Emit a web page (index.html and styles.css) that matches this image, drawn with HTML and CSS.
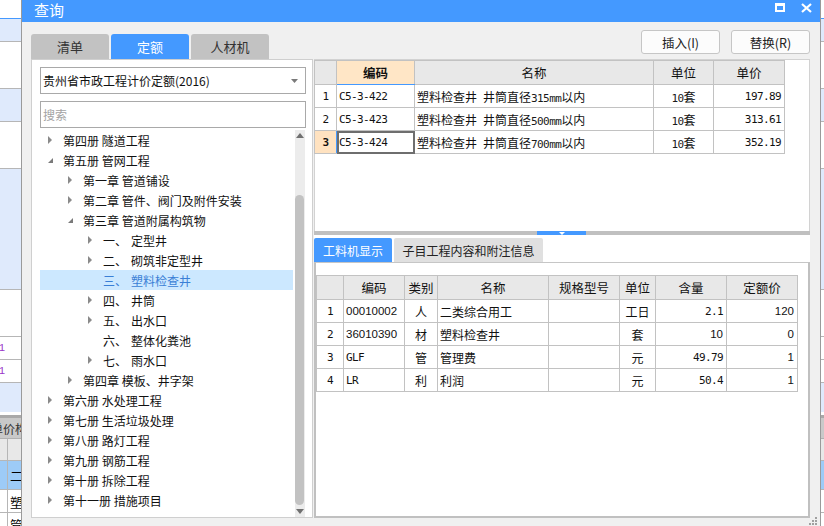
FILE: index.html
```html
<!DOCTYPE html>
<html lang="zh-CN">
<head>
<meta charset="utf-8">
<title>查询</title>
<link rel="stylesheet" href="styles.css">
</head>
<body>
<div class="desk">
  <div class="bg-strip bg-left">
    <div class="bl bl-a"></div>
    <div class="bl bl-b"></div>
    <div class="bl bl-c"></div>
    <div class="bl bl-d"></div>
    <div class="bl bl-c"></div>
    <div class="bl bl-e"></div>
    <div class="bl bl-c"></div>
    <div class="bl bl-f"><span class="purple">21</span></div>
    <div class="bl bl-f"><span class="purple">21</span></div>
    <div class="bl bl-g"></div>
    <div class="bl bl-h"></div>
    <div class="bl bl-head"><span class="hd-text">单价构成</span></div>
    <div class="bl bl-cell"><i class="vl"></i></div>
    <div class="bl bl-sel"><i class="vl"></i><span class="cell-text">二</span></div>
    <div class="bl bl-cell2"><i class="vl"></i><span class="cell-text">塑</span></div>
    <div class="bl bl-cell2"><i class="vl"></i><span class="cell-text">管</span></div>
  </div>

  <div class="dialog">
    <div class="titlebar">
      <span class="title">查询</span>
      <div class="winbtns">
        <svg class="wicon" width="10" height="9" viewBox="0 0 10 9"><rect x="1" y="1" width="8" height="7" fill="none" stroke="#fff" stroke-width="2"/><rect x="0" y="0" width="10" height="3" fill="#fff"/></svg>
        <svg class="wicon" width="11" height="10" viewBox="0 0 11 10"><path d="M1 1 L10 9 M10 1 L1 9" stroke="#fff" stroke-width="2.2" fill="none"/></svg>
      </div>
    </div>

    <div class="dbody">
      <div class="leftcol">
        <div class="tabs">
          <div class="tab">清单</div>
          <div class="tab active">定额</div>
          <div class="tab">人材机</div>
        </div>
        <div class="lpanel">
          <div class="select">
            <span>贵州省市政工程计价定额(2016)</span>
            <svg class="sel-arrow" width="7" height="4" viewBox="0 0 7 4"><polygon points="0,0 7,0 3.5,4" fill="#7a7a7a"/></svg>
          </div>
          <div class="search">搜索</div>
          <div class="treewrap">
            <ul class="tree">
              <li class="node lv0"><svg class="tw" width="16" height="20"><polygon points="1,6 5,10 1,14" fill="#8a8a8a"/></svg><span>第四册 隧道工程</span></li>
              <li class="node lv0"><svg class="tw" width="16" height="20"><polygon points="6,8 6,13 1,13" fill="#7a7a7a"/></svg><span>第五册 管网工程</span></li>
              <li class="node lv1"><svg class="tw" width="16" height="20"><polygon points="1,6 5,10 1,14" fill="#8a8a8a"/></svg><span>第一章 管道铺设</span></li>
              <li class="node lv1"><svg class="tw" width="16" height="20"><polygon points="1,6 5,10 1,14" fill="#8a8a8a"/></svg><span>第二章 管件、阀门及附件安装</span></li>
              <li class="node lv1"><svg class="tw" width="16" height="20"><polygon points="6,8 6,13 1,13" fill="#7a7a7a"/></svg><span>第三章 管道附属构筑物</span></li>
              <li class="node lv2"><svg class="tw" width="16" height="20"><polygon points="1,6 5,10 1,14" fill="#8a8a8a"/></svg><span class="ord">一、</span><span>定型井</span></li>
              <li class="node lv2"><svg class="tw" width="16" height="20"><polygon points="1,6 5,10 1,14" fill="#8a8a8a"/></svg><span class="ord">二、</span><span>砌筑非定型井</span></li>
              <li class="node lv2 selected"><span class="tw"></span><span class="ord">三、</span><span>塑料检查井</span></li>
              <li class="node lv2"><svg class="tw" width="16" height="20"><polygon points="1,6 5,10 1,14" fill="#8a8a8a"/></svg><span class="ord">四、</span><span>井筒</span></li>
              <li class="node lv2"><svg class="tw" width="16" height="20"><polygon points="1,6 5,10 1,14" fill="#8a8a8a"/></svg><span class="ord">五、</span><span>出水口</span></li>
              <li class="node lv2"><span class="tw"></span><span class="ord">六、</span><span>整体化粪池</span></li>
              <li class="node lv2"><svg class="tw" width="16" height="20"><polygon points="1,6 5,10 1,14" fill="#8a8a8a"/></svg><span class="ord">七、</span><span>雨水口</span></li>
              <li class="node lv1"><svg class="tw" width="16" height="20"><polygon points="1,6 5,10 1,14" fill="#8a8a8a"/></svg><span>第四章 模板、井字架</span></li>
              <li class="node lv0"><svg class="tw" width="16" height="20"><polygon points="1,6 5,10 1,14" fill="#8a8a8a"/></svg><span>第六册 水处理工程</span></li>
              <li class="node lv0"><svg class="tw" width="16" height="20"><polygon points="1,6 5,10 1,14" fill="#8a8a8a"/></svg><span>第七册 生活垃圾处理</span></li>
              <li class="node lv0"><svg class="tw" width="16" height="20"><polygon points="1,6 5,10 1,14" fill="#8a8a8a"/></svg><span>第八册 路灯工程</span></li>
              <li class="node lv0"><svg class="tw" width="16" height="20"><polygon points="1,6 5,10 1,14" fill="#8a8a8a"/></svg><span>第九册 钢筋工程</span></li>
              <li class="node lv0"><svg class="tw" width="16" height="20"><polygon points="1,6 5,10 1,14" fill="#8a8a8a"/></svg><span>第十册 拆除工程</span></li>
              <li class="node lv0"><svg class="tw" width="16" height="20"><polygon points="1,6 5,10 1,14" fill="#8a8a8a"/></svg><span>第十一册 措施项目</span></li>
            </ul>
            <div class="vscroll">
              <div class="sb-up"><svg width="8" height="5" viewBox="0 0 8 5"><polygon points="0,5 8,5 4,0" fill="#707070"/></svg></div>
              <div class="sb-track"><div class="sb-thumb"></div></div>
              <div class="sb-down"><svg width="8" height="5" viewBox="0 0 8 5"><polygon points="0,0 8,0 4,5" fill="#707070"/></svg></div>
            </div>
          </div>
        </div>
      </div>

      <div class="rightcol">
        <div class="actions">
          <button class="btn">插入(I)</button>
          <button class="btn">替换(R)</button>
        </div>
        <div class="toppanel">
          <table class="grid tgrid">
            <colgroup><col class="w22"><col class="w78"><col class="w239"><col class="w60"><col class="w71"></colgroup>
            <thead>
              <tr><th></th><th class="cur-col">编码</th><th>名称</th><th>单位</th><th>单价</th></tr>
            </thead>
            <tbody>
              <tr><td class="rn mono">1</td><td class="l mono">C5-3-422</td><td class="l">塑料检查井<span class="mono">&nbsp;</span>井筒直径<span class="mono">315mm</span>以内</td><td class="c"><span class="mono">10</span>套</td><td class="r mono">197.89</td></tr>
              <tr><td class="rn mono">2</td><td class="l mono">C5-3-423</td><td class="l">塑料检查井<span class="mono">&nbsp;</span>井筒直径<span class="mono">500mm</span>以内</td><td class="c"><span class="mono">10</span>套</td><td class="r mono">313.61</td></tr>
              <tr><td class="rn mono cur-row">3</td><td class="l mono cur-cell">C5-3-424</td><td class="l">塑料检查井<span class="mono">&nbsp;</span>井筒直径<span class="mono">700mm</span>以内</td><td class="c"><span class="mono">10</span>套</td><td class="r mono">352.19</td></tr>
            </tbody>
          </table>
        </div>
        <div class="splitter"><div class="split-grip"><svg width="6" height="3" viewBox="0 0 6 3"><polygon points="0,0 6,0 3,3" fill="#fff"/></svg></div></div>
        <div class="bottompanel">
          <div class="btabs">
            <div class="btab active">工料机显示</div>
            <div class="btab">子目工程内容和附注信息</div>
          </div>
          <div class="bbox">
            <table class="grid bgrid">
              <colgroup><col class="w27"><col class="w61"><col class="w33"><col class="w111"><col class="w71"><col class="w36"><col class="w71"><col class="w71"></colgroup>
              <thead>
                <tr><th></th><th>编码</th><th>类别</th><th>名称</th><th>规格型号</th><th>单位</th><th>含量</th><th>定额价</th></tr>
              </thead>
              <tbody>
                <tr><td class="rn mono">1</td><td class="l lat">00010002</td><td class="c">人</td><td class="l">二类综合用工</td><td></td><td class="c">工日</td><td class="r mono">2.1</td><td class="r lat">120</td></tr>
                <tr><td class="rn mono">2</td><td class="l lat">36010390</td><td class="c">材</td><td class="l">塑料检查井</td><td></td><td class="c">套</td><td class="r lat">10</td><td class="r lat">0</td></tr>
                <tr><td class="rn mono">3</td><td class="l mono">GLF</td><td class="c">管</td><td class="l">管理费</td><td></td><td class="c">元</td><td class="r mono">49.79</td><td class="r lat">1</td></tr>
                <tr><td class="rn mono">4</td><td class="l mono">LR</td><td class="c">利</td><td class="l">利润</td><td></td><td class="c">元</td><td class="r mono">50.4</td><td class="r lat">1</td></tr>
              </tbody>
            </table>
          </div>
        </div>
      </div>
    </div>
    <svg class="resize-grip" width="10" height="10" viewBox="0 0 10 10">
      <rect x="7" y="1" width="2" height="2" fill="#a0a0a0"/>
      <rect x="4" y="4" width="2" height="2" fill="#a0a0a0"/><rect x="7" y="4" width="2" height="2" fill="#a0a0a0"/>
      <rect x="1" y="7" width="2" height="2" fill="#a0a0a0"/><rect x="4" y="7" width="2" height="2" fill="#a0a0a0"/><rect x="7" y="7" width="2" height="2" fill="#a0a0a0"/>
    </svg>
  </div>

  <div class="bg-strip bg-right">
    <div class="bl bl-a"></div>
    <div class="bl bl-b"></div>
    <div class="bl bl-c"></div>
    <div class="bl bl-d"></div>
    <div class="bl bl-c"></div>
    <div class="bl bl-e"></div>
    <div class="bl bl-c"></div>
    <div class="bl bl-f"></div>
    <div class="bl bl-f"></div>
    <div class="bl bl-g"></div>
    <div class="bl bl-h"></div>
    <div class="bl bl-head"></div>
    <div class="bl bl-cell"></div>
    <div class="bl bl-sel"></div>
    <div class="bl bl-cell2"></div>
    <div class="bl bl-cell2"></div>
  </div>
</div>
</body>
</html>
```

FILE: styles.css
```css
* { box-sizing: border-box; margin: 0; padding: 0; }
html, body { width: 824px; height: 526px; overflow: hidden; }
body {
  font-family: "Noto Sans CJK SC", "Microsoft YaHei", sans-serif;
  font-size: 12px;
  color: #111;
  background: #fff;
}
.desk { display: flex; width: 824px; height: 526px; overflow: hidden; }

/* background application strips */
.bg-strip { flex: none; display: flex; flex-direction: column; overflow: hidden; background: #fff; }
.bg-left { width: 21px; }
.bg-right { width: 3px; }
.bl { flex: none; display: flex; align-items: center; overflow: hidden; white-space: nowrap; border-bottom: 1px solid #b6b6b6; background: #fff; }
.bl-a { height: 19px; border-bottom-color: #4499ff; }
.bl-b { height: 23px; background: #dfeafc; }
.bl-c { height: 47px; }
.bl-d { height: 33px; background: #dfeafc; }
.bl-e { height: 121px; background: #dfeafc; }
.bl-f { height: 23px; }
.bl-g { height: 29px; background: #dfeafc; border-bottom: none; }
.bl-h { height: 6px; border-bottom: 3px solid #a9a9a9; }
.bl-head { height: 21px; background: #c9c9c9; border-bottom-color: #b0b0b0; }
.bl-cell { height: 22px; background: #e8e8e8; }
.bl-sel { height: 29px; background: #9dcbf7; }
.bl-cell2 { height: 23px; }
.purple { color: #9a36c8; font-family: "Liberation Mono", monospace; font-size: 11px; margin-left: -8px; }
.hd-text { font-size: 12px; color: #333; margin-left: -9px; }
.vl { display: block; flex: none; width: 8px; align-self: stretch; border-right: 1px solid #b6b6b6; }
.cell-text { font-size: 13px; margin-left: 2px; color: #000; }

/* dialog */
.dialog {
  width: 800px; flex: none;
  border-left: 1px solid #9a9a9a; border-right: 1px solid #9a9a9a;
  background: #f0f0f0;
  display: flex; flex-direction: column;
  position: relative;
}
.titlebar {
  height: 22px; flex: none; background: #4499ff;
  display: flex; align-items: flex-start; padding-left: 12px;
}
.title { color: #fff; font-size: 15px; line-height: 20px; }
.winbtns { margin-left: auto; display: flex; align-items: flex-start; gap: 16px; padding-right: 8px; padding-top: 3px; }
.wicon { display: block; }

.dbody { flex: 1; display: flex; gap: 1px; padding: 8px 10px 8px 9px; min-height: 0; }
.leftcol { width: 282px; flex: none; padding-top: 4px; display: flex; flex-direction: column; }
.tabs { display: flex; gap: 2px; height: 25px; flex: none; }
.tab {
  width: 78px; background: #c2c2c2; color: #333; font-size: 13px;
  display: flex; align-items: center; justify-content: center;
  border-radius: 3px 3px 0 0;
}
.tab.active { background: #4499ff; color: #fff; }

.lpanel {
  height: 459px; flex: none; background: #fff; border: 1px solid #cfcfcf;
  padding: 7px 6px 0 8px; display: flex; flex-direction: column;
}
.select, .search {
  height: 27px; flex: none; border: 1px solid #a9a9a9; background: #fff;
  display: flex; align-items: center; padding-left: 2px; font-size: 12px;
}
.select { color: #111; }
.sel-arrow { margin-left: auto; margin-right: 7px; }
.search { margin-top: 7px; color: #a3a3a3; }

.treewrap { margin-top: 2px; flex: 1; display: flex; gap: 2px; min-height: 0; }
.tree { list-style: none; width: 253px; flex: none; overflow: hidden; }
.node { height: 20px; display: flex; align-items: center; white-space: nowrap; color: #111; }
.node.lv0 { padding-left: 7px; }
.node.lv1 { padding-left: 27px; }
.node.lv2 { padding-left: 47px; }
.tw { display: block; width: 16px; height: 20px; flex: none; }
.ord { margin-right: 4px; }
.node.selected { background: #cce8ff; color: #3a7fd6; }

.vscroll { width: 10px; flex: none; display: flex; flex-direction: column; background: #ececec; }
.sb-up { height: 14px; display: flex; justify-content: center; align-items: flex-start; padding-top: 3px; }
.sb-track { flex: 1; padding-top: 51px; }
.sb-thumb { height: 310px; width: 9px; background: #c2c2c2; border-radius: 5px; }
.sb-down { height: 12px; display: flex; justify-content: center; align-items: flex-start; padding-top: 4px; }

.rightcol { flex: 1; display: flex; flex-direction: column; min-width: 0; }
.actions { height: 24px; flex: none; display: flex; justify-content: flex-end; gap: 11px; margin-bottom: 5px; }
.btn {
  width: 79px; height: 24px; background: #fcfcfc; border: 1px solid #c6c6c6; border-radius: 3px;
  font-family: "Noto Sans CJK SC", sans-serif; font-size: 12.5px; color: #222;
}
.toppanel { height: 172px; flex: none; background: #fff; border: 1px solid #d2d2d2; border-bottom: none; }

.grid { border-collapse: collapse; table-layout: fixed; background: #fff; }
.grid th, .grid td {
  border: 1px solid #c2c2c2; height: 23px; padding: 0 3px;
  white-space: nowrap; overflow: hidden; font-weight: normal; color: #111;
}
.grid th { background: #e8e8e8; height: 24px; text-align: center; font-size: 12.5px; }
.tgrid { width: 470px; margin-left: -1px; }
.bgrid { width: 481px; margin-top: 12px; }
.w22 { width: 22px; } .w78 { width: 78px; } .w239 { width: 239px; } .w60 { width: 60px; }
.w71 { width: 71px; } .w27 { width: 27px; } .w61 { width: 61px; } .w33 { width: 33px; }
.w111 { width: 111px; } .w36 { width: 36px; }
.l { text-align: left; }
.r { text-align: right; }
.c { text-align: center; }
.rn { text-align: center; }
.grid td.l { padding-left: 2px; }
.mono { font-family: "DejaVu Sans Mono", monospace; font-size: 11px; letter-spacing: -0.6px; color: #1a1a1a; }
.lat { font-family: "Liberation Sans", sans-serif; font-size: 11.5px; }
.grid th.cur-col { background: #ffe6c6; font-weight: bold; border-bottom: 1px solid #4499ff; }
.grid td.cur-row { background: #ffe2c0; font-weight: bold; border-right: 1px solid #4499ff; }
.grid td.cur-cell { outline: 2px solid #6e6e6e; outline-offset: -2px; }

.splitter { height: 4px; flex: none; background: #c0c0c0; display: flex; }
.split-grip { margin-left: 223px; width: 49px; background: #4499ff; display: flex; justify-content: center; align-items: center; }
.split-grip svg { display: block; }

.bottompanel { flex: 1; background: #fff; padding-top: 3px; display: flex; flex-direction: column; min-height: 0; }
.btabs { height: 24px; flex: none; display: flex; gap: 2px; }
.btab {
  background: #e0e0e0; color: #222; font-size: 12px; padding: 0 6px;
  display: flex; align-items: center; justify-content: center; border-radius: 2px 2px 0 0;
  width: 149px;
}
.btab.active { background: #4499ff; color: #fff; width: 78px; }
.bbox {
  flex: 1; background: #fff;
  border-top: 1px solid #c6c6c6; border-left: 2px solid #c0c0c0; border-right: 2px solid #c0c0c0; border-bottom: 2px solid #c0c0c0;
}

.resize-grip { position: absolute; right: 2px; bottom: 0; }
```
